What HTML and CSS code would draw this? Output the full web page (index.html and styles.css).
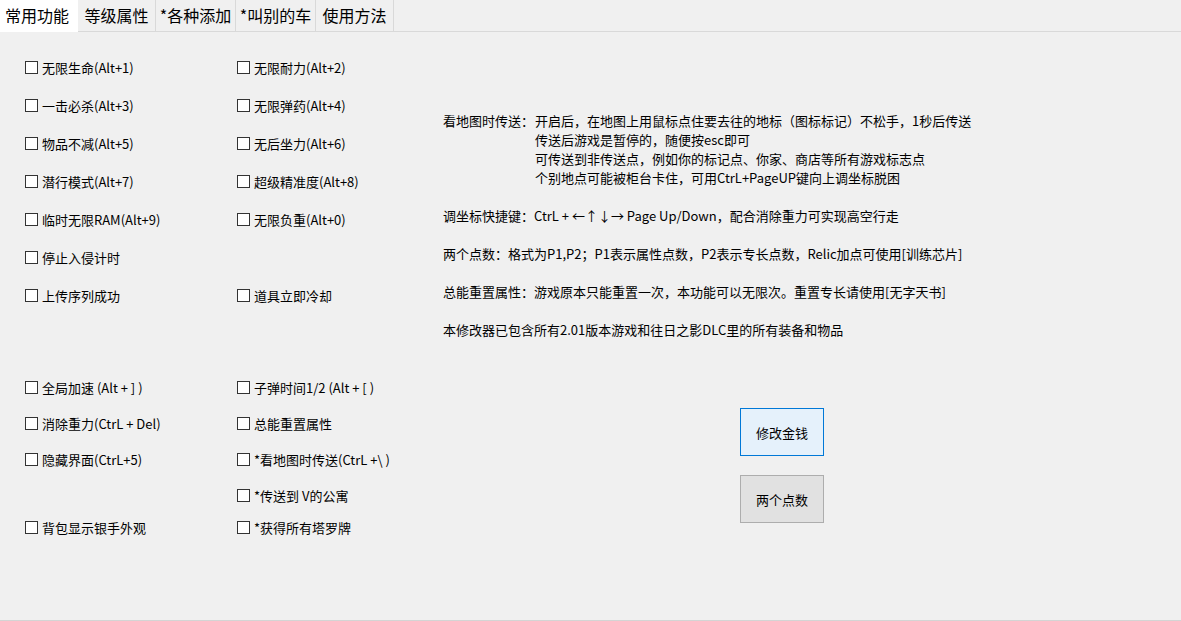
FILE: index.html
```html
<!DOCTYPE html>
<html lang="zh-CN">
<head>
    <meta charset="UTF-8">
    <title>修改器</title>
    <link rel="stylesheet" href="styles.css">
</head>
<body>
    <div class="tabs">
        <div class="tab active">常用功能</div>
        <div class="tab">等级属性</div>
        <div class="tab wide">*各种添加</div>
        <div class="tab wide">*叫别的车</div>
        <div class="tab">使用方法</div>
    </div>

    <div class="page">
        <!-- 左边的开关 -->
        <div class="opts">
            <label class="opt"><span class="box"></span>无限生命(Alt+1)</label>
            <label class="opt"><span class="box"></span>无限耐力(Alt+2)</label>
            <label class="opt"><span class="box"></span>一击必杀(Alt+3)</label>
            <label class="opt"><span class="box"></span>无限弹药(Alt+4)</label>
            <label class="opt"><span class="box"></span>物品不减(Alt+5)</label>
            <label class="opt"><span class="box"></span>无后坐力(Alt+6)</label>
            <label class="opt"><span class="box"></span>潜行模式(Alt+7)</label>
            <label class="opt"><span class="box"></span>超级精准度(Alt+8)</label>
            <label class="opt"><span class="box"></span>临时无限RAM(Alt+9)</label>
            <label class="opt"><span class="box"></span>无限负重(Alt+0)</label>
            <label class="opt"><span class="box"></span>停止入侵计时</label>
            <span></span>
            <label class="opt"><span class="box"></span>上传序列成功</label>
            <label class="opt"><span class="box"></span>道具立即冷却</label>

            <span class="gap"></span>
            <span class="gap"></span>

            <label class="opt"><span class="box"></span>全局加速 (Alt + ] )</label>
            <label class="opt"><span class="box"></span>子弹时间1/2 (Alt + [ )</label>
            <label class="opt"><span class="box"></span>消除重力(CtrL + Del)</label>
            <label class="opt"><span class="box"></span>总能重置属性</label>
            <label class="opt"><span class="box"></span>隐藏界面(CtrL+5)</label>
            <label class="opt"><span class="box"></span>*看地图时传送(CtrL +\ )</label>
            <span></span>
            <label class="opt"><span class="box"></span>*传送到 V的公寓</label>
            <label class="opt"><span class="box"></span>背包显示银手外观</label>
            <label class="opt"><span class="box"></span>*获得所有塔罗牌</label>
        </div>

        <!-- 右边的说明 -->
        <div class="notes">
            <div class="note">
                <span class="note-label">看地图时传送：</span>
                <div>
                    开启后，在地图上用鼠标点住要去往的地标（图标标记）不松手，1秒后传送<br>
                    传送后游戏是暂停的，随便按esc即可<br>
                    可传送到非传送点，例如你的标记点、你家、商店等所有游戏标志点<br>
                    个别地点可能被柜台卡住，可用CtrL+PageUP键向上调坐标脱困
                </div>
            </div>
            <div class="note">调坐标快捷键：CtrL + ←↑↓→ Page Up/Down，配合消除重力可实现高空行走</div>
            <div class="note">两个点数：格式为P1,P2；P1表示属性点数，P2表示专长点数，Relic加点可使用[训练芯片]</div>
            <div class="note">总能重置属性：游戏原本只能重置一次，本功能可以无限次。重置专长请使用[无字天书]</div>
            <div class="note">本修改器已包含所有2.01版本游戏和往日之影DLC里的所有装备和物品</div>

            <div class="buttons">
                <button class="btn focus">修改金钱</button>
                <button class="btn">两个点数</button>
            </div>
        </div>
    </div>
</body>
</html>
```

FILE: styles.css
```css
body {
    margin: 0;
    height: 621px;
    box-sizing: border-box;
    background: #f0f0f0;
    font-family: "Noto Sans CJK SC", "Noto Sans", sans-serif;
    font-size: 13px;
    color: #000;
    border-bottom: 1px solid #d4d4d4;
    overflow: hidden;
}

.tabs {
    display: flex;
    height: 31px;
    border-bottom: 1px solid #d9d9d9;
}

.tab {
    width: 78px;
    height: 31px;
    line-height: 31px;
    box-sizing: border-box;
    text-align: center;
    font-size: 16px;
    border-right: 1px solid #d9d9d9;
    white-space: nowrap;
}

.tab.wide {
    width: 80px;
}

.tab.active {
    background: #fff;
    height: 32px;
    border-right: none;
    text-align: left;
    padding-left: 5px;
}

.page {
    display: flex;
    padding: 16px 0 0 25px;
}

.opts {
    display: grid;
    grid-template-columns: 212px 206px;
    grid-template-rows: repeat(7, 38px) 55px repeat(4, 36px) 28px;
}

.opt {
    display: flex;
    align-items: center;
    gap: 4px;
    white-space: nowrap;
}

.box {
    width: 11px;
    height: 11px;
    border: 1px solid #333;
    background: #fff;
    flex-shrink: 0;
}

.notes {
    padding-top: 63px;
    line-height: 19px;
}

.note {
    display: flex;
    margin-bottom: 19px;
    white-space: nowrap;
}

.note-label {
    width: 92px;
    flex-shrink: 0;
}

.buttons {
    display: flex;
    flex-direction: column;
    gap: 19px;
    margin: 69px 0 0 297px;
}

.btn {
    width: 84px;
    height: 48px;
    font-family: inherit;
    font-size: 13px;
    color: #000;
    background: #e1e1e1;
    border: 1px solid #adadad;
    padding: 0;
}

.btn.focus {
    background: #e5f1fb;
    border-color: #0078d7;
}
```
